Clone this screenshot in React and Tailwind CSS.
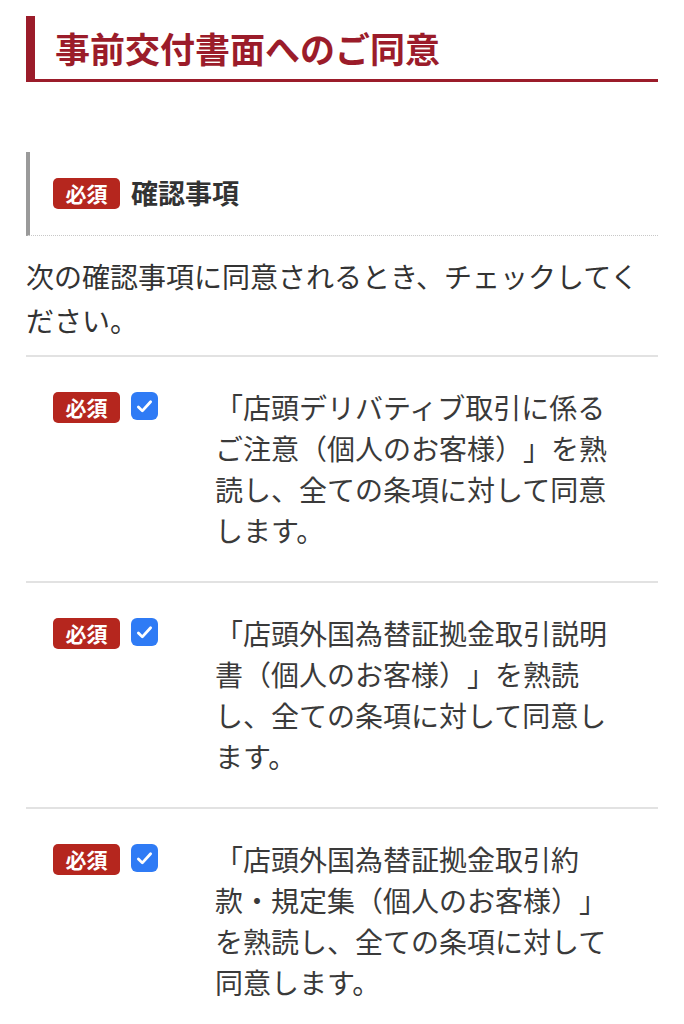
const items = [
  "「店頭デリバティブ取引に係るご注意（個人のお客様）」を熟読し、全ての条項に対して同意します。",
  "「店頭外国為替証拠金取引説明書（個人のお客様）」を熟読し、全ての条項に対して同意します。",
  "「店頭外国為替証拠金取引約款・規定集（個人のお客様）」を熟読し、全ての条項に対して同意します。",
]

function Required() {
  return (
    <span className="inline-flex items-center justify-center w-[67px] h-[31px] rounded-[5px] bg-[#b5261e] text-white text-[21px] font-bold leading-none shrink-0">
      必須
    </span>
  )
}

function Checkbox() {
  return (
    <span className="inline-flex items-center justify-center w-[27px] h-[28px] rounded-[6px] bg-[#2f7bf5] shrink-0">
      <svg width="21" height="21" viewBox="0 0 24 24" fill="none" stroke="white" strokeWidth="3.2" strokeLinecap="round" strokeLinejoin="round">
        <path d="M5 12.5l4.5 4.5L19 6.5" />
      </svg>
    </span>
  )
}

export default function App() {
  return (
    <div className="min-h-[1024px] bg-white px-[26px] pt-4 text-[#333] [text-spacing-trim:space-all]" style={{ fontFamily: '"Noto Sans CJK JP", "Noto Sans", sans-serif' }}>
      <h1 className="flex items-center h-[66px] border-l-[9px] border-b-[3px] border-[#9b1c2a] pl-[20px] text-[35px] font-bold text-[#9b1c2a] leading-none">
        事前交付書面へのご同意
      </h1>

      <div className="mt-[70px] flex items-center gap-[11px] h-[84px] border-l-4 border-l-[#9a9a9a] [border-left-style:solid] border-b border-b-[#c8c8c8] [border-bottom-style:dotted] pl-[23px]">
        <Required />
        <span className="text-[27px] font-bold text-[#333]">確認事項</span>
      </div>

      <p className="mt-[18px] mb-[13px] text-[28px] leading-[44px] text-[#333]">
        次の確認事項に同意されるとき、チェックしてください。
      </p>

      <div className="border-t-2 border-[#e2e2e2]">
        {items.map((text, i) => (
          <div key={i} className="flex py-[30px] border-b-2 border-[#e2e2e2]">
            <div className="w-[189px] shrink-0 flex items-start gap-[11px] pl-[27px] pt-[5px]">
              <Required />
              <Checkbox />
            </div>
            <p className="w-[400px] text-[28px] leading-[41px] text-[#3a3a3a]">{text}</p>
          </div>
        ))}
      </div>
    </div>
  )
}
